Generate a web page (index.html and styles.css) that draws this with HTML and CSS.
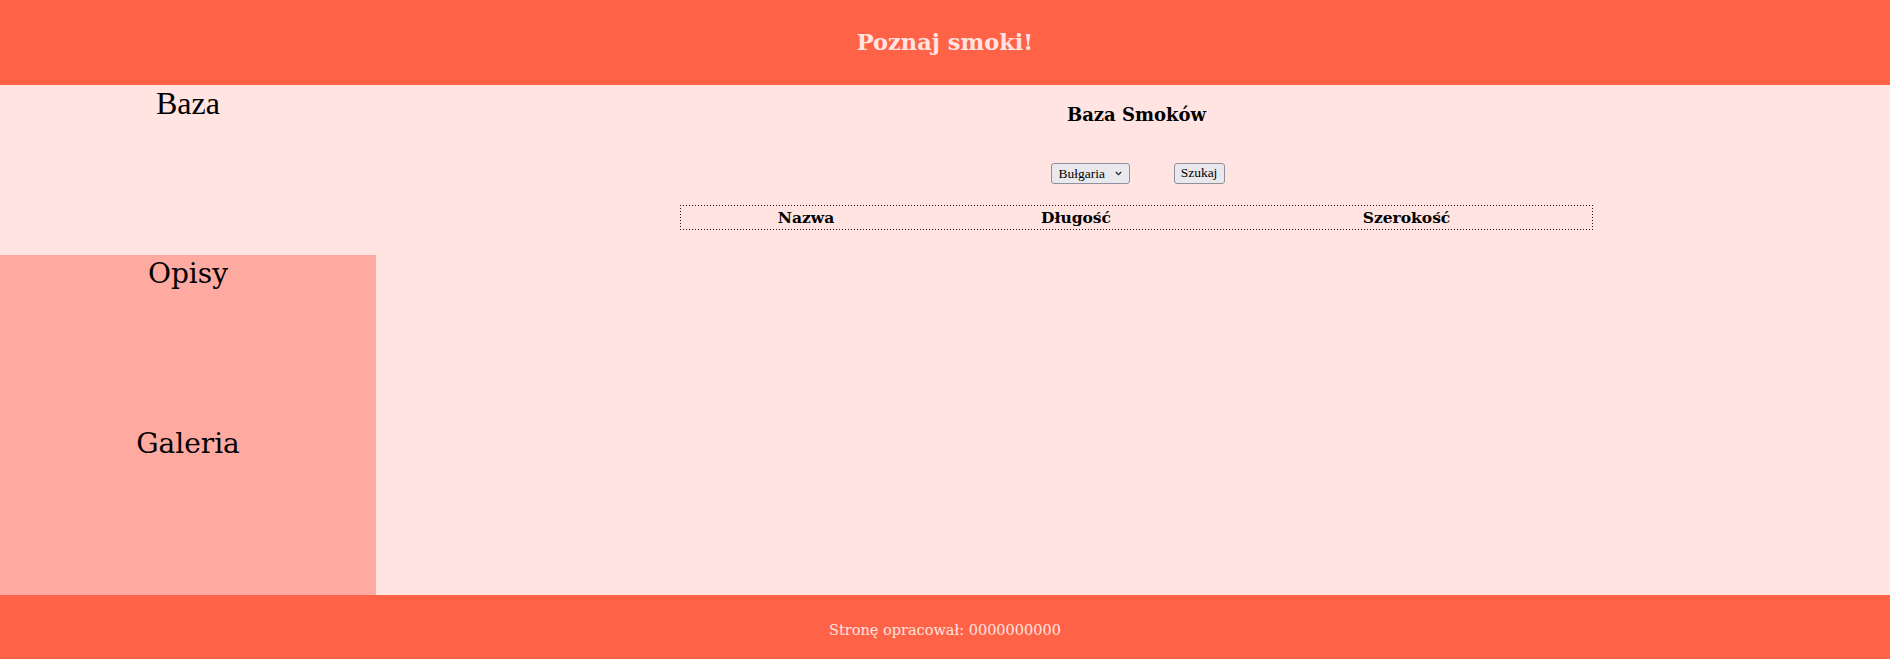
FILE: index.html
```html
<!DOCTYPE html>
<html lang="pl">
<head>
<meta charset="utf-8">
<title>Poznaj smoki!</title>
<link rel="stylesheet" href="styles.css">
</head>
<body>
<header class="top">
  <h1 class="title">Poznaj smoki!</h1>
</header>
<div class="middle">
  <nav class="side">
    <div class="side-block side-baza">Baza</div>
    <div class="side-block side-opisy">Opisy</div>
    <div class="side-block side-galeria">Galeria</div>
  </nav>
  <main class="main">
    <h3 class="main-title">Baza Smoków</h3>
    <form class="controls">
      <div class="select-wrap">
        <select class="country">
          <option>Bułgaria</option>
          <option>Chiny</option>
          <option>Polska</option>
        </select>
        <svg class="chev" width="7" height="5" viewBox="0 0 7 5" aria-hidden="true"><path d="M0.8 1 L3.5 3.7 L6.2 1" fill="none" stroke="#222" stroke-width="1.1"/></svg>
      </div>
      <button type="button" class="search">Szukaj</button>
    </form>
    <table class="dragons">
      <colgroup>
        <col class="c1"><col class="c2"><col class="c3">
      </colgroup>
      <thead>
        <tr><th>Nazwa</th><th>Długość</th><th>Szerokość</th></tr>
      </thead>
    </table>
  </main>
</div>
<footer class="bottom">Stronę opracował: 0000000000</footer>
</body>
</html>
```
FILE: styles.css
```css
html, body {
  margin: 0;
  padding: 0;
}
body {
  background: #FFE4E1;
  font-family: "DejaVu Serif", "Liberation Serif", serif;
  color: #000;
  width: 1890px;
  height: 659px;
  overflow: hidden;
}
.top {
  height: 85px;
  background: #FF6347;
  display: flex;
  align-items: center;
  justify-content: center;
  box-sizing: border-box;
  padding-bottom: 2px;
}
.title {
  margin: 0;
  font-size: 22.5px;
  font-weight: bold;
  color: #FFE4E1;
}
.middle {
  display: flex;
  height: 510px;
}
.side {
  width: 376px;
  flex: none;
  display: flex;
  flex-direction: column;
}
.side-block {
  height: 170px;
  box-sizing: border-box;
  text-align: center;
  line-height: 1;
}
.side-baza {
  background: #FFE4E1;
  font-family: "Liberation Serif", serif;
  font-size: 32px;
  padding-top: 2px;
}
.side-opisy, .side-galeria {
  background: #FFAAA0;
  font-size: 28px;
  padding-top: 5px;
}
.main {
  flex: 1;
  padding-left: 7px;
  text-align: center;
}
.main-title {
  margin: 0;
  padding-top: 19px;
  font-size: 18px;
  line-height: 21.6px;
  font-weight: bold;
}
.controls {
  margin: 37px 0 0;
  padding-left: 2px;
  display: flex;
  justify-content: center;
  gap: 44px;
}
.select-wrap {
  position: relative;
  display: flex;
}
.chev {
  position: absolute;
  right: 8px;
  top: 8px;
  pointer-events: none;
}
.country, .search {
  font-family: "Liberation Serif", serif;
  font-size: 13.5px;
  height: 21px;
  box-sizing: border-box;
  background-color: #E9E9ED;
  border: 1px solid #8F8F9D;
  border-radius: 3px;
  color: #000;
  margin: 0;
}
.country {
  -webkit-appearance: none;
  appearance: none;
  width: 79px;
  padding: 0 0 0 7px;
  text-align: left;
}
.search {
  width: 51px;
  padding: 0 4px;
}
.dragons {
  margin: 21px auto 0;
  width: 913px;
  border: 1px solid transparent;
  border-spacing: 0;
  table-layout: fixed;
  background-origin: border-box;
  background-clip: border-box;
  background-repeat: no-repeat;
  background-image:
    repeating-linear-gradient(to right, #2a0c2e 0 1px, transparent 1px 3px),
    repeating-linear-gradient(to right, #2a0c2e 0 1px, transparent 1px 3px),
    repeating-linear-gradient(to bottom, #2a0c2e 0 1px, transparent 1px 3px),
    repeating-linear-gradient(to bottom, #2a0c2e 0 1px, transparent 1px 3px);
  background-size: 100% 1px, 100% 1px, 1px 100%, 1px 100%;
  background-position: left top, left bottom, left top, right top;
}
.c1 { width: 250px; }
.c2 { width: 290px; }
.dragons th {
  padding: 0;
  height: 23px;
  font-size: 15.5px;
  line-height: 23px;
  font-weight: bold;
  text-align: center;
}
.bottom {
  height: 64px;
  background: #FF6347;
  color: #FFE4E1;
  display: flex;
  align-items: center;
  justify-content: center;
  box-sizing: border-box;
  padding-top: 6px;
  font-size: 14.5px;
}
```
